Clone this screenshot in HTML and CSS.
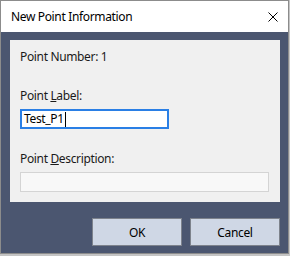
FILE: index.html
```html
<!DOCTYPE html>
<html lang="en">
  <head>
    <meta charset="UTF-8">
    <title>New Point Information</title>
    <link rel="stylesheet" href="styles.css">
  </head>
  <body>
    <div class="window">
      <div class="titlebar">
        <span class="title">New Point Information</span>
        <svg class="close" width="10" height="10" viewBox="0 0 10 10">
          <path d="M0.5 0.5 L9.5 9.5 M9.5 0.5 L0.5 9.5" stroke="#000" stroke-width="1" fill="none"/>
        </svg>
      </div>
      <div class="content">
        <div class="panel">
          <div class="row-text">Point Number: 1</div>
          <div class="field label-field">
            <label class="row-text">Point <u>L</u>abel:</label>
            <div class="textbox active">Test_P1<span class="caret"></span></div>
          </div>
          <div class="field desc-field">
            <label class="row-text">Point <u>D</u>escription:</label>
            <div class="textbox wide"></div>
          </div>
        </div>
        <div class="buttons">
          <button class="btn">OK</button>
          <button class="btn">Cancel</button>
        </div>
      </div>
    </div>
  </body>
</html>
```

FILE: styles.css
```css
:root {
  --slate: #4b5670;
  --panel: #f0f0f0;
  --frame: #8c8c8c;
  --focus: #2a7fe5;
}

body {
  margin: 0;
  background: #c4c4c4;
  font-family: "Noto Sans", "Open Sans", sans-serif;
  font-size: 12px;
  letter-spacing: -0.35px;
  color: #1a1a1a;
}

.window {
  width: 289px;
  height: 254px;
  box-sizing: border-box;
  border: 1px solid var(--frame);
  background: var(--slate);
  display: flex;
  flex-direction: column;
}

.titlebar {
  height: 31px;
  background: #ffffff;
  display: flex;
  align-items: center;
  justify-content: space-between;
  padding: 0 10px 0 10px;
  box-sizing: border-box;
  color: #000;
}

.title {
  line-height: 16px;
}

.close {
  display: block;
}

.content {
  padding: 8px 8px 0 9px;
}

.panel {
  background: var(--panel);
  height: 162px;
  box-sizing: border-box;
  padding: 9px 10px 10px 10px;
}

.row-text {
  display: block;
  line-height: 16px;
}

.field {
  display: flex;
  flex-direction: column;
  gap: 5px;
}

.label-field {
  margin-top: 23px;
}

.desc-field {
  margin-top: 22px;
}

.textbox {
  height: 20px;
  box-sizing: border-box;
  line-height: 16px;
  padding: 0 2px;
  display: flex;
  align-items: center;
}

.textbox.active {
  width: 149px;
  border: 2px solid var(--focus);
  background: #ffffff;
  color: #000;
}

.textbox.wide {
  width: 249px;
  border: 1px solid #d4d4d4;
  background: #f8f8f8;
}

.caret {
  display: inline-block;
  width: 1px;
  height: 15px;
  background: #000;
  margin-left: 1px;
}

.buttons {
  display: flex;
  justify-content: flex-end;
  gap: 8px;
  margin-top: 16px;
}

.btn {
  width: 90px;
  height: 28px;
  border: 1px solid #7d828c;
  background: #cfd7e5;
  font-family: inherit;
  font-size: 12px;
  letter-spacing: -0.35px;
  color: #000;
  padding: 0;
}
```
